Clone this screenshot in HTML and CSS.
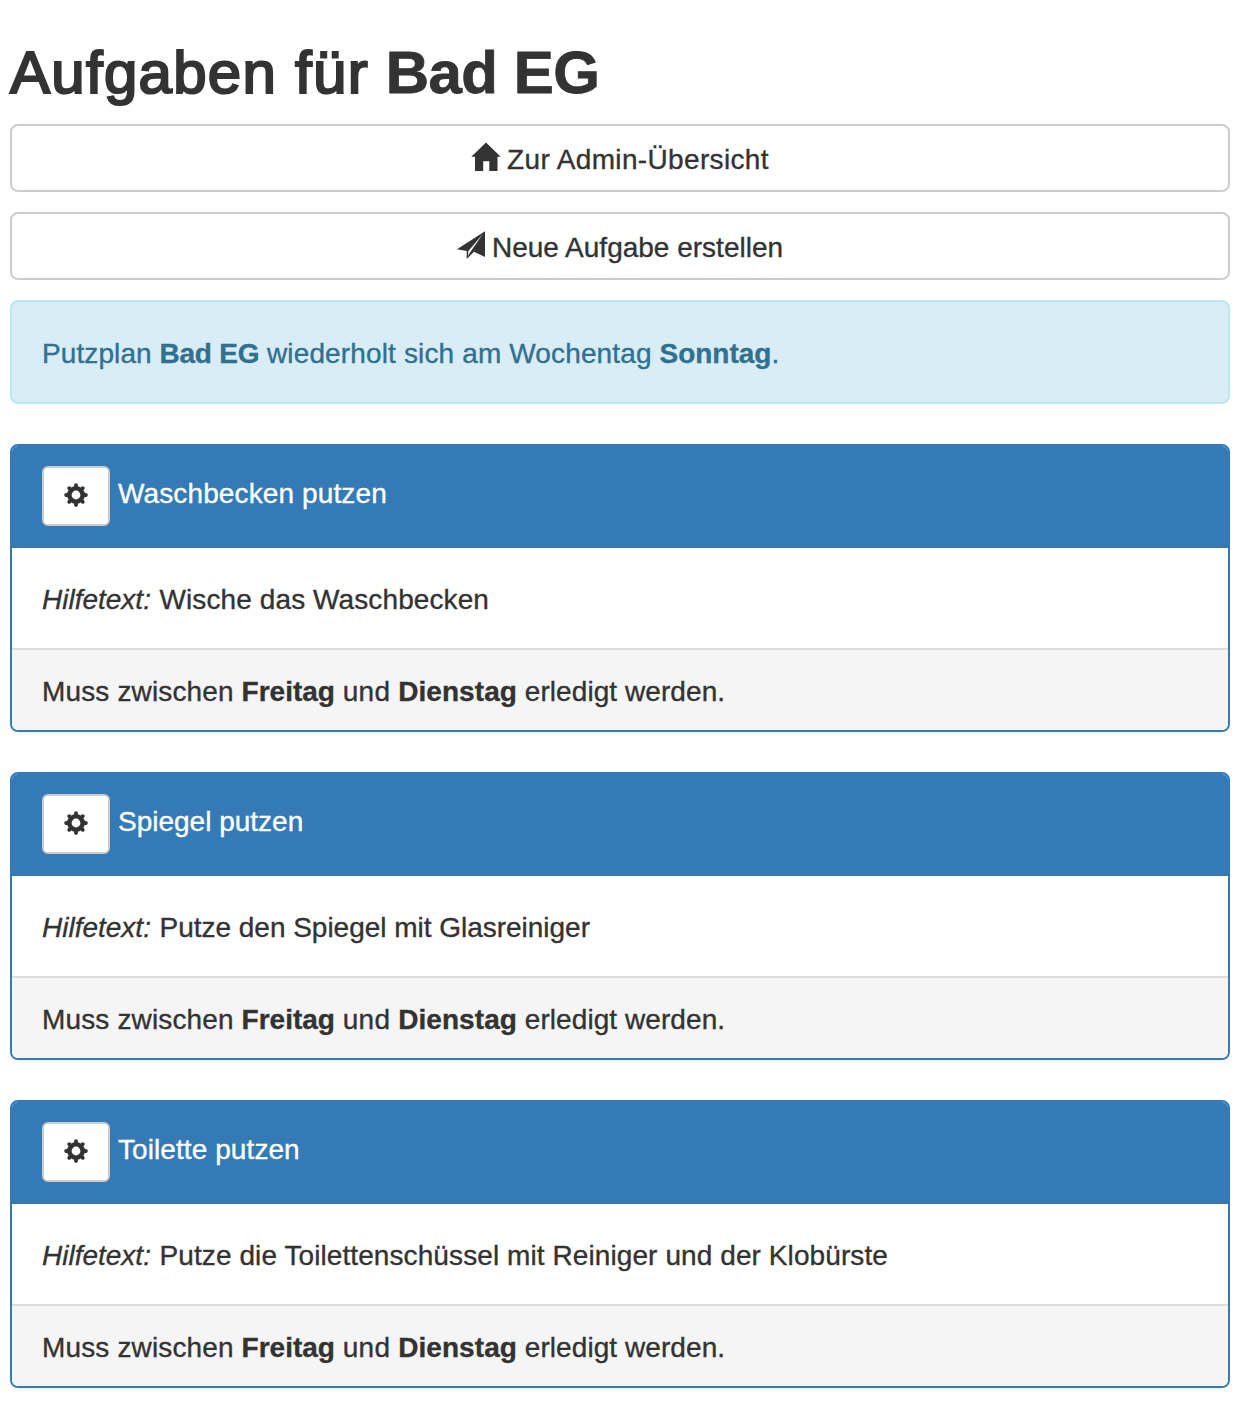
FILE: index.html
```
<!DOCTYPE html>
<html lang="de">
<head>
<meta charset="utf-8">
<title>Aufgaben für Bad EG</title>
<link rel="stylesheet" href="styles.css">
</head>
<body>
<svg class="sprite" aria-hidden="true">
  <symbol id="cog" viewBox="0 0 24 24">
    <circle cx="12" cy="12" r="6.700" fill="none" stroke="#333" stroke-width="4.600"/>
    <path fill="none" stroke="#333" stroke-width="3.800" stroke-linecap="round" d="M12 5V2.100M12 19V21.900M5 12H2.100M19 12H21.900M7 7L5.200 5.200M17 7L18.800 5.200M7 17L5.200 18.800M17 17L18.800 18.800"/>
  </symbol>
</svg>
<main class="page">
  <h1 class="title"><span class="t-a">Aufgaben für</span> <strong class="t-b">Bad EG</strong></h1>
  <a class="button"><svg class="icon home" viewBox="0 0 30 29"><path d="M15 0.500L29.700 14.700H26.500V29H18.300V19.300H12.200V29H4V14.700H.3Z"/></svg><span class="b-home">Zur Admin-Übersicht</span></a>
  <a class="button"><svg class="icon send" viewBox="0 0 28 28"><path fill-rule="evenodd" d="M0 18.300L28 .3V26L17 20.800L9.700 28V20Z M26 2.800L11.200 20.200V24.800L14 20Z"/></svg><span class="b-send">Neue Aufgabe erstellen</span></a>
  <p class="alert"><span class="a-1">Putzplan</span> <strong class="a-2">Bad EG</strong> <span class="a-3">wiederholt sich am Wochentag</span> <strong class="a-4">Sonntag</strong>.</p>
  <section class="panel">
    <header class="head"><button class="gear"><svg viewBox="0 0 24 24"><use href="#cog"/></svg></button><span class="n-1">Waschbecken putzen</span></header>
    <p class="help"><em>Hilfetext:</em> <span class="h-1">Wische das Waschbecken</span></p>
    <footer class="foot"><span class="f-1">Muss zwischen</span> <strong class="f-2">Freitag</strong> <span class="f-3">und</span> <strong class="f-4">Dienstag</strong> <span class="f-5">erledigt werden.</span></footer>
  </section>
  <section class="panel">
    <header class="head"><button class="gear"><svg viewBox="0 0 24 24"><use href="#cog"/></svg></button><span class="n-2">Spiegel putzen</span></header>
    <p class="help"><em>Hilfetext:</em> <span class="h-2">Putze den Spiegel mit Glasreiniger</span></p>
    <footer class="foot"><span class="f-1">Muss zwischen</span> <strong class="f-2">Freitag</strong> <span class="f-3">und</span> <strong class="f-4">Dienstag</strong> <span class="f-5">erledigt werden.</span></footer>
  </section>
  <section class="panel">
    <header class="head"><button class="gear"><svg viewBox="0 0 24 24"><use href="#cog"/></svg></button><span class="n-3">Toilette putzen</span></header>
    <p class="help"><em>Hilfetext:</em> <span class="h-3">Putze die Toilettenschüssel mit Reiniger und der Klobürste</span></p>
    <footer class="foot"><span class="f-1">Muss zwischen</span> <strong class="f-2">Freitag</strong> <span class="f-3">und</span> <strong class="f-4">Dienstag</strong> <span class="f-5">erledigt werden.</span></footer>
  </section>
</main>
</body>
</html>
```
FILE: styles.css
```
* { box-sizing: border-box; }
body {
  margin: 0;
  background: #fff;
  color: #333;
  font: 28px/40px "Liberation Sans", Arial, sans-serif;
  -webkit-text-stroke: .35px currentColor;
}
.sprite { position: absolute; width: 0; height: 0; }
.page { padding: 40px 12px 0 10px; }
.title {
  margin: 0 0 18px;
  font-size: 60px;
  line-height: 66px;
  font-weight: 400;
}
.t-a { -webkit-text-stroke: 2.2px #333; letter-spacing: 1.28px; }
.t-b { -webkit-text-stroke: .8px #333; letter-spacing: -.5px; }
strong { font-weight: 700; }
.button {
  display: flex;
  align-items: center;
  justify-content: center;
  height: 68px;
  margin-bottom: 20px;
  padding-top: 4px;
  border: 2px solid #ccc;
  border-radius: 8px;
}
.icon { fill: #333; flex: none; margin-top: -7px; }
.home { width: 30px; height: 29px; margin-right: 6px; }
.send { width: 28px; height: 28px; margin: -6px 7px 0 0; }
.b-home { letter-spacing: .35px; }
.alert {
  height: 104px;
  margin: 0 0 40px;
  padding: 32px 30px 28px;
  border: 2px solid #bce8f1;
  border-radius: 8px;
  background: #d9edf7;
  color: #31708f;
}
.a-1 { letter-spacing: .1px; }
.a-2 { letter-spacing: -.25px; }
.a-3 { letter-spacing: .14px; }
.panel {
  height: 288px;
  margin-bottom: 40px;
  border: 2px solid #337ab7;
  border-radius: 8px;
  box-shadow: 0 2px 2px rgba(0, 0, 0, .05);
}
.head {
  display: flex;
  height: 102px;
  padding: 20px 30px;
  border-radius: 6px 6px 0 0;
  background: #337ab7;
  color: #fff;
}
.head span { margin-top: 8px; }
.n-1 { letter-spacing: .12px; }
.n-3 { letter-spacing: .08px; }
.gear {
  display: flex;
  align-items: center;
  justify-content: center;
  width: 68px;
  height: 60px;
  margin-right: 8px;
  padding: 0 0 2px;
  border: 2px solid #ccc;
  border-radius: 6px;
  background: #fff;
}
.gear svg { width: 24px; height: 24px; }
.help { height: 100px; margin: 0; padding: 32px 30px 28px; }
.help em { margin-right: .8px; }
.h-1 { letter-spacing: .1px; }
.h-2 { letter-spacing: -.02px; }
.h-3 { letter-spacing: .09px; }
.foot {
  height: 82px;
  padding: 22px 30px 18px;
  border-top: 2px solid #ddd;
  border-radius: 0 0 6px 6px;
  background: #f5f5f5;
}
.f-1 { letter-spacing: .15px; }
.f-3 { letter-spacing: .3px; }
.f-4 { letter-spacing: .08px; }
.f-5 { letter-spacing: .07px; }
```
